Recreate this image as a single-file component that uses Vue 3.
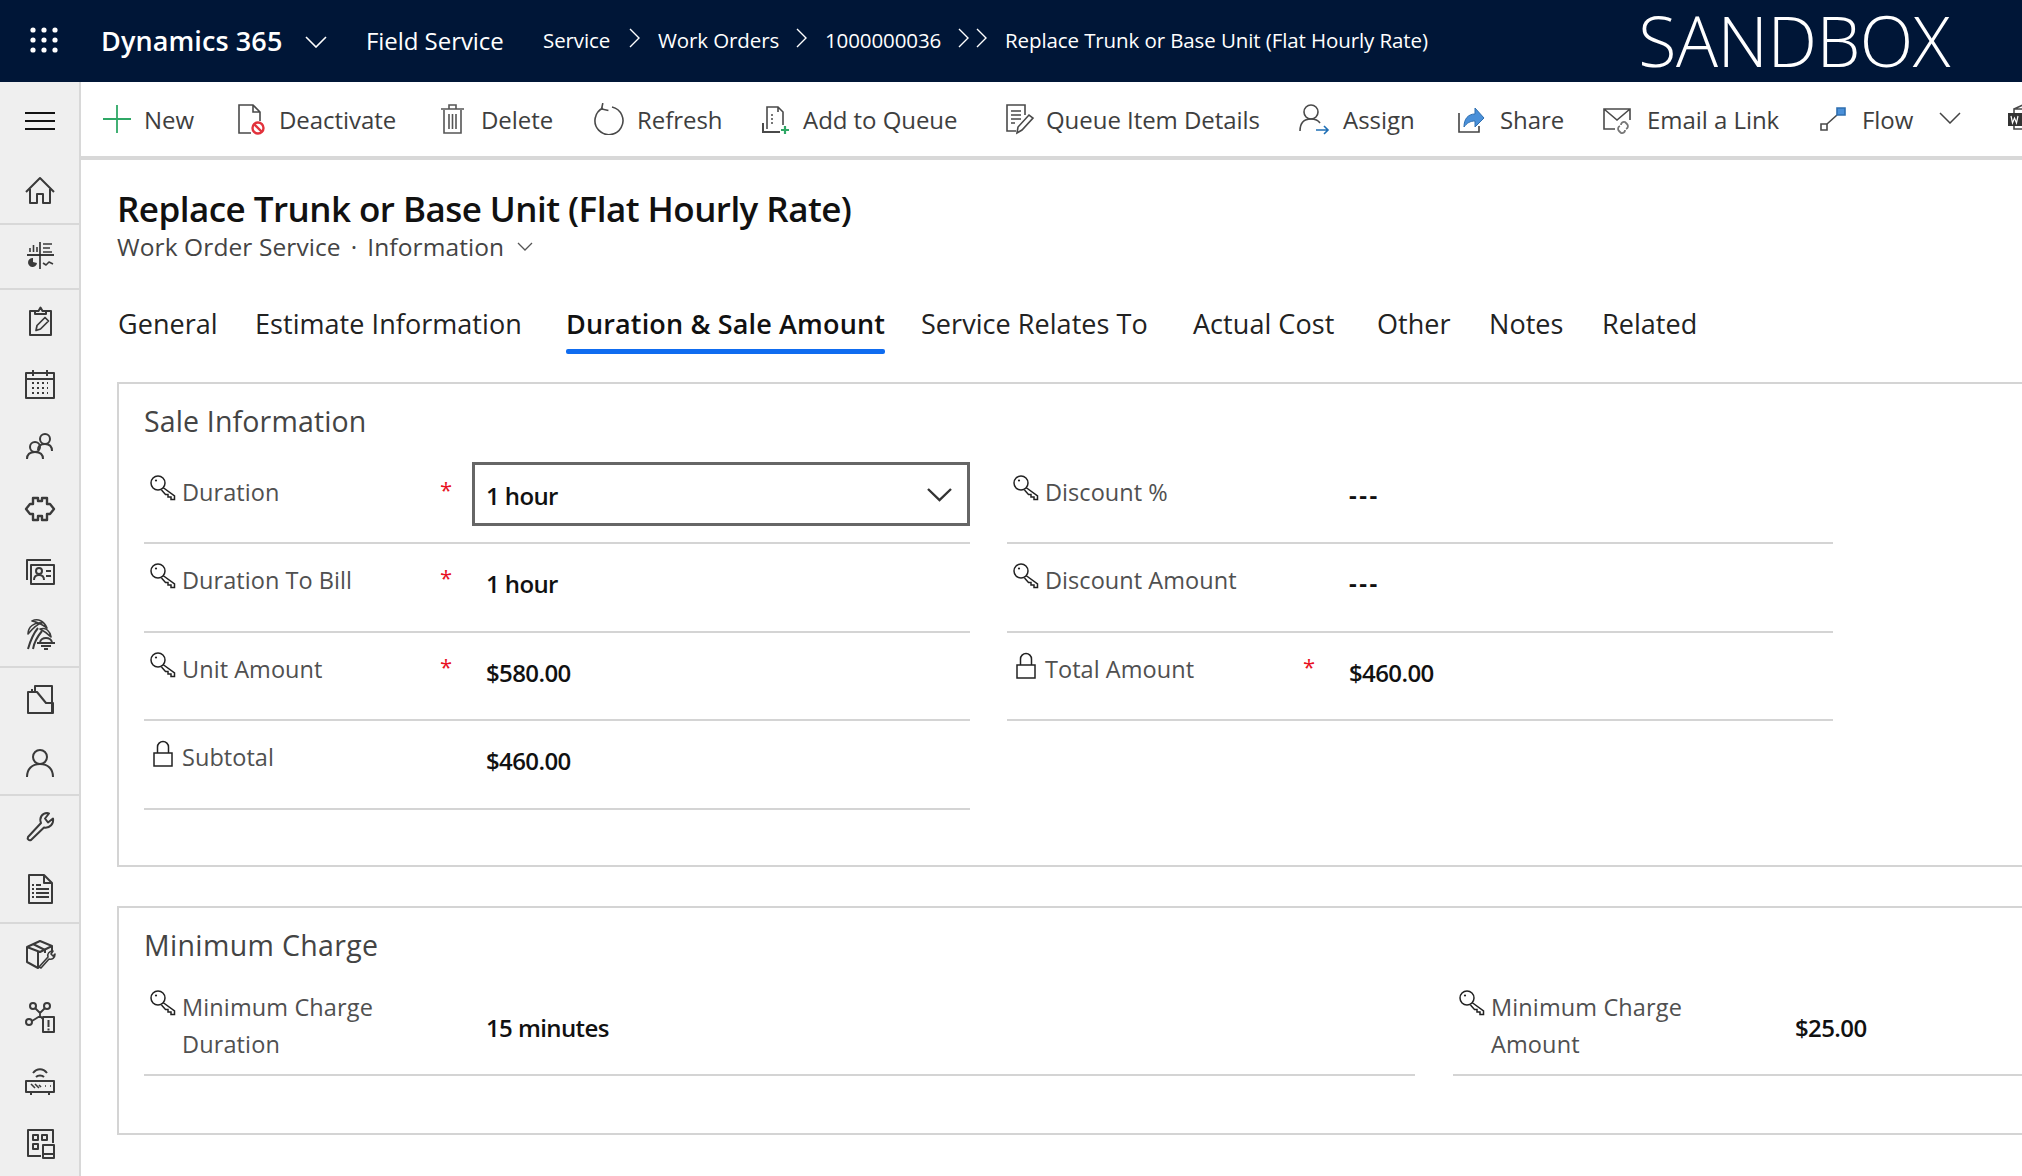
<template>
  <div class="page">
    <header class="topbar">
      <svg class="waffle" width="28" height="26" viewBox="0 0 28 26" fill="#fff">
        <template v-for="y in [3, 13, 23]" :key="y">
          <circle v-for="x in [3, 14, 25]" :key="x" :cx="x" :cy="y" r="2.6" />
        </template>
      </svg>
      <span class="brand">Dynamics 365</span>
      <svg class="brand-chev" width="22" height="12" viewBox="0 0 22 12" fill="none" stroke="#fff" stroke-width="1.6"><path d="M1 1l10 10L21 1" /></svg>
      <span class="app-name">Field Service</span>
      <nav class="crumbs">
        <span class="crumb c1">Service</span>
        <svg class="sep" width="12" height="20" viewBox="0 0 12 20" fill="none" stroke="#fff" stroke-width="1.4"><path d="M1 1l9 9-9 9" /></svg>
        <span class="crumb c2">Work Orders</span>
        <svg class="sep" width="12" height="20" viewBox="0 0 12 20" fill="none" stroke="#fff" stroke-width="1.4"><path d="M1 1l9 9-9 9" /></svg>
        <span class="crumb c3">1000000036</span>
        <svg class="sep" width="30" height="20" viewBox="0 0 30 20" fill="none" stroke="#fff" stroke-width="1.4"><path d="M1 1l9 9-9 9M19 1l9 9-9 9" /></svg>
        <span class="crumb c4">Replace Trunk or Base Unit (Flat Hourly Rate)</span>
      </nav>
      <span class="sandbox">SANDBOX</span>
    </header>

    <div class="body">
      <aside class="sidebar">
        <div class="burger"><span></span><span></span><span></span></div>
        <div v-for="(group, g) in navGroups" :key="g" class="nav-group">
          <div v-for="name in group" :key="name" class="nav-item">
            <svg width="32" height="32" viewBox="0 0 32 32" fill="none" stroke="#3a3a3a" stroke-width="2" stroke-linejoin="round" v-html="navIcons[name]"></svg>
          </div>
        </div>
      </aside>

      <main class="main">
        <div class="toolbar">
          <div v-for="cmd in commands" :key="cmd.label" class="cmd" :style="{ width: cmd.width + 'px', gap: cmd.gap + 'px' }">
            <svg width="32" height="32" viewBox="0 0 32 32" fill="none" stroke="#4a4a4a" stroke-width="1.6" v-html="cmdIcons[cmd.icon]"></svg>
            <span class="cmd-text">{{ cmd.label }}</span>
          </div>
          <svg class="cmd-more" width="22" height="12" viewBox="0 0 22 12" fill="none" stroke="#444" stroke-width="1.5"><path d="M1 1l10 10L21 1" /></svg>
          <svg class="cmd-word" width="32" height="32" viewBox="0 0 32 32" fill="none" stroke="#4a4a4a" stroke-width="1.6" v-html="cmdIcons.word"></svg>
        </div>

        <div class="content">
          <h1 class="title">Replace Trunk or Base Unit (Flat Hourly Rate)</h1>
          <div class="subtitle">
            <span>Work Order Service</span>
            <span class="dot">·</span>
            <span>Information</span>
            <svg width="16" height="9" viewBox="0 0 16 9" fill="none" stroke="#555" stroke-width="1.3"><path d="M1 1l7 7 7-7" /></svg>
          </div>

          <div class="tabs">
            <span v-for="tab in tabs" :key="tab.label" class="tab" :class="{ active: tab.active }" :style="{ width: tab.width + 'px' }">{{ tab.label }}</span>
          </div>

          <section class="card sale">
            <h2 class="card-title">Sale Information</h2>
            <div class="sale-grid">
              <div class="sale-col">
                <div v-for="f in saleLeft" :key="f.label" class="field">
                  <div class="field-label">
                    <svg width="28" height="28" viewBox="0 0 28 28" fill="none" stroke="#222" stroke-width="1.5" v-html="f.locked ? lockIcon : keyIcon"></svg>
                    <span>{{ f.label }}</span>
                  </div>
                  <span class="req">{{ f.required ? '*' : '' }}</span>
                  <div v-if="f.select" class="select">
                    <span>{{ f.value }}</span>
                    <svg width="25" height="14" viewBox="0 0 25 14" fill="none" stroke="#333" stroke-width="2.4"><path d="M1 1l11.500 11L24 1" /></svg>
                  </div>
                  <div v-else class="field-value">{{ f.value }}</div>
                </div>
              </div>
              <div class="sale-col">
                <div v-for="f in saleRight" :key="f.label" class="field">
                  <div class="field-label">
                    <svg width="28" height="28" viewBox="0 0 28 28" fill="none" stroke="#222" stroke-width="1.5" v-html="f.locked ? lockIcon : keyIcon"></svg>
                    <span>{{ f.label }}</span>
                  </div>
                  <span class="req">{{ f.required ? '*' : '' }}</span>
                  <div class="field-value" :class="{ dash: f.value === '---' }">{{ f.value }}</div>
                </div>
              </div>
            </div>
          </section>

          <section class="card minimum">
            <h2 class="card-title">Minimum Charge</h2>
            <div class="min-grid">
              <div v-for="f in minimum" :key="f.value" class="field tall">
                <div class="field-label">
                  <svg width="28" height="28" viewBox="0 0 28 28" fill="none" stroke="#222" stroke-width="1.5" v-html="keyIcon"></svg>
                  <span>{{ f.label }}</span>
                </div>
                <span class="req"></span>
                <div class="field-value">{{ f.value }}</div>
              </div>
            </div>
          </section>
        </div>
      </main>
    </div>
  </div>
</template>

<script setup>
const navGroups = [
  ['home'],
  ['dash'],
  ['clip', 'cal', 'people', 'puzzle', 'card', 'palm'],
  ['folder', 'person'],
  ['wrench', 'doc'],
  ['box', 'graph', 'router', 'tiles']
]

const navIcons = {
  home: '<path d="M2 17L16 3l14 14M6 14v14h7v-9h6v9h7V14"/>',
  dash: '<g stroke-width="1.6"><path d="M3 15h27" stroke-width="2"/><path d="M16 2v27" stroke="#2a2a2a"/><path d="M6 12V8M9.5 12V5M13 12V7M19 4h9M19 8h7M19 12h9"/><path d="M19 23l3 2 3-3 4 2"/></g><path d="M9 18a4.500 4.500 0 1 0 4 5l-4-1z" fill="#3a3a3a" stroke="none"/>',
  clip: '<path d="M11 6H6v24h21V6h-5"/><path d="M11 9V6h3.500l2-3.500 2 3.500H22v3z"/><path d="M12 25.500l1-5 8-8 3.500 3.500-8 8z" stroke-width="1.700"/>',
  cal: '<path d="M2 5h28v25H2zM2 11h28M9 2v6M23 2v6"/><path d="M8 15h16M8 20h16M8 25h16" stroke-dasharray="2 3" stroke-width="2"/>',
  people: '<circle cx="21" cy="8" r="5"/><path d="M14 19c0-4 3-6 7-6s7 2 7 7"/><circle cx="11" cy="16" r="5"/><path d="M3 28c0-5 3-7 8-7s8 2 8 7"/>',
  puzzle: '<path d="M9 5h5v3h4V5h5v6h3l4 5-4 5h-3v6h-5v-4h-4v4H9v-6H6l-4-5 4-5h3z" stroke-width="2.400"/>',
  card: '<path d="M3 24V4h24"/><path d="M7 9h23v19H7z"/><circle cx="15" cy="15" r="3"/><path d="M10 24c0-3 2-5 5-5s5 2 5 5M22 15h5M22 20h5"/>',
  palm: '<path d="M4 30c2-7 4-14 10-21M9 30c1-6 4-12 9-18"/><path d="M4 15c0-7 6-12 14-11-5 1-9 5-14 11zM8 2c6-3 12 0 15 7-4-3-10-6-15-7zM16 10c6-2 10 2 11 8-3-3-7-6-11-8z" stroke-width="1.600"/><path d="M16 23c1-3 4-4 6-4s5 1 6 4M13 24h18M17 27h10M20 30h4"/>',
  folder: '<path d="M11 8V2h17v27"/><path d="M8 8V5"/><path d="M4 29V8h9l9 11h7v10z"/>',
  person: '<circle cx="16" cy="10" r="7"/><path d="M3 30c0-8 5-13 13-13s13 5 13 13"/>',
  wrench: '<path d="M4 26l13-14c-2-5 1-10 6-10l2 .5-4 5 3 4 5-4c1 5-3 10-9 9L7 29c-2 1-4-1-3-3z"/>',
  doc: '<path d="M5 1h15l8 8v20H5zM20 1v8h8" /><path d="M8 11h2M12 11h5M8 15h2M12 15h13M8 19h2M12 19h13M8 23h2M12 23h13"/>',
  box: '<path d="M3 8L16 2l12 5-12 6zM3 8v15l11 6V13"/><path d="M9 5l12 6v3M28 7v6"/><path d="M16 29l9-10c-1-3 1-6 5-6l-2 3 2 2 2-2c0 4-3 6-6 5l-8 9z" stroke-width="1.600" transform="translate(-1 -1)"/>',
  graph: '<circle cx="9" cy="4" r="3"/><circle cx="23" cy="4" r="3"/><circle cx="5" cy="20" r="3"/><path d="M11 6l5 5 5-5M16 11v3l-8 5M16 14l3 3" stroke-width="1.800"/><path d="M19 15h11v15H19zM24.500 18v7M24.500 26.500v2" stroke-width="2"/>',
  router: '<path d="M2 16h28v11H2zM7 27v3M25 27v3"/><path d="M9 8c4-5 10-5 14 0M12 12c2-2 6-2 8 0"/><path d="M7 19l4 4M11 19l4 4M15 20l2 2M21 21h1M26 21h1" stroke-width="1.600"/>',
  tiles: '<path d="M17 29H4V3h25v13"/><path d="M9 8h5v5H9zM18 8h5v5h-5zM9 17h5v5H9zM19 18h11v13H19zM19 27h11"/>'
}

const commands = [
  { label: 'New', icon: 'plus', width: 133, gap: 11 },
  { label: 'Deactivate', icon: 'deactivate', width: 203, gap: 13 },
  { label: 'Delete', icon: 'trash', width: 156, gap: 12 },
  { label: 'Refresh', icon: 'refresh', width: 166, gap: 12 },
  { label: 'Add to Queue', icon: 'queue', width: 244, gap: 12 },
  { label: 'Queue Item Details', icon: 'details', width: 295, gap: 11 },
  { label: 'Assign', icon: 'assign', width: 155, gap: 13 },
  { label: 'Share', icon: 'share', width: 148, gap: 15 },
  { label: 'Email a Link', icon: 'email', width: 215, gap: 14 },
  { label: 'Flow', icon: 'flow', width: 119, gap: 14 }
]

const cmdIcons = {
  plus: '<path d="M16 2v28M2 16h28" stroke="#2fa866" stroke-width="1.8"/>',
  deactivate: '<path d="M17 30H5V2h14l7 7v9M19 2v7h7"/><circle cx="24" cy="25" r="5.500" stroke="#e2323c" stroke-width="2.400"/><path d="M20 21l8 8" stroke="#e2323c" stroke-width="2.400"/>',
  trash: '<path d="M7 7v23h17V7M4 6h23M12 6V2h7v4M12 11v15M15.500 11v15M19 11v15" stroke="#555"/>',
  refresh: '<path d="M10 5a14 14 0 1 0 9-1"/><path d="M9 0v6h7" transform="rotate(12 9 4)"/>',
  queue: '<path d="M8 26V4h11l5 5v13M19 4v5"/><path d="M12 12h2M12 16h2M12 20h2"/><path d="M4 20v9h17" stroke-width="2"/><path d="M26 23v8M22 27h8" stroke="#2fa866" stroke-width="2.200"/>',
  details: '<path d="M22 12V2H4v26h9"/><path d="M8 8h10M8 12h10M8 16h10M8 20h4" /><path d="M14 30l1-6L26 12l4 3-11 12z" />',
  assign: '<circle cx="13" cy="9" r="7"/><path d="M2 28c0-8 4-12 11-12 4 0 7 1 9 4"/><path d="M18 27h12M26 23l4 4-4 4" stroke="#1f6fb5"/>',
  share: '<path d="M6 10v19h20v-6" stroke="#444"/><path d="M11 24c0-8 4-13 11-13V5l9 10-9 9v-6c-5 0-8 2-11 6z" fill="#4a90d9" stroke="#2f6fb0" stroke-width="1"/>',
  email: '<path d="M14 26H3V6h26v11M3 6l13 11L29 6"/><path d="M20 22a3 3 0 0 1 4-3l2 2a3 3 0 0 1-1 5M24 27a3 3 0 0 1-4 3l-2-2a3 3 0 0 1 1-5" stroke="#777" stroke-width="1.800"/>',
  flow: '<path d="M5 21h6v6H5z" /><path d="M11 21l10-9" /><path d="M21 5h8v7h-8z" fill="#4a90d9" stroke="#2f6fb0"/>',
  word: '<path d="M8 6h18v20H8zM8 6l9-4 9 4"/><path d="M2 10h15v13H2z" fill="#333" stroke="none"/><path d="M5 13l1.500 7 2-5 2 5 1.500-7" stroke="#fff" stroke-width="1.200"/>'
}

const keyIcon = '<circle cx="9" cy="9" r="7"/><circle cx="7" cy="6.500" r="1.100" fill="#222" stroke="none"/><path d="M14 13.500L25.500 22v3.500H22V23h-3v-2.500h-2.500L12.500 16"/>'
const lockIcon = '<path d="M5 14h18v13H5zM8.500 14V8a5.500 5.500 0 0 1 11 0v6"/>'

const tabs = [
  { label: 'General', width: 137 },
  { label: 'Estimate Information', width: 311 },
  { label: 'Duration & Sale Amount', width: 355, active: true },
  { label: 'Service Relates To', width: 272 },
  { label: 'Actual Cost', width: 184 },
  { label: 'Other', width: 112 },
  { label: 'Notes', width: 113 },
  { label: 'Related', width: 100 }
]

const saleLeft = [
  { label: 'Duration', required: true, value: '1 hour', select: true },
  { label: 'Duration To Bill', required: true, value: '1 hour' },
  { label: 'Unit Amount', required: true, value: '$580.00' },
  { label: 'Subtotal', value: '$460.00', locked: true }
]

const saleRight = [
  { label: 'Discount %', value: '---' },
  { label: 'Discount Amount', value: '---' },
  { label: 'Total Amount', required: true, value: '$460.00', locked: true }
]

const minimum = [
  { label: 'Minimum Charge Duration', value: '15 minutes' },
  { label: 'Minimum Charge Amount', value: '$25.00' }
]
</script>

<style scoped>
.page {
  width: 2022px;
  height: 1176px;
  overflow: hidden;
  font-family: "Open Sans", "Noto Sans", sans-serif;
  color: #111;
  background: #fff;
}

.topbar {
  height: 82px;
  box-sizing: border-box;
  padding-bottom: 2px;
  background: #001637;
  color: #fff;
  display: flex;
  align-items: center;
}

.waffle { flex: none; margin-left: 30px; }

.brand {
  flex: none;
  margin-left: 43px;
  font-size: 27px;
  font-weight: 600;
  letter-spacing: 0.1px;
  width: 181px;
  white-space: nowrap;
}

.brand-chev { flex: none; margin: 4px 0 0 23px; }

.app-name {
  flex: none;
  margin-left: 39px;
  font-size: 24px;
  letter-spacing: -0.05px;
  width: 143px;
  white-space: nowrap;
}

.crumbs {
  flex: none;
  display: flex;
  align-items: center;
  margin-left: 34px;
  font-size: 20.5px;
  letter-spacing: -0.1px;
  white-space: nowrap;
}

.c1 { width: 86px; }
.c2 { width: 138px; margin-left: 17px; }
.c3 { width: 133px; margin-left: 17px; }
.c4 { margin-left: 17px; }
.crumbs .sep { margin-top: -4px; }

.sandbox {
  flex: none;
  margin-left: auto;
  margin-right: 72px;
  line-height: 80px;
  font-size: 70px;
  font-weight: 300;
  letter-spacing: -0.5px;
}

.body {
  display: flex;
  height: 1094px;
}

.sidebar {
  width: 81px;
  box-sizing: border-box;
  flex: none;
  background: #efefef;
  border-right: 2px solid #d8d8d8;
}

.burger {
  height: 78px;
  display: flex;
  flex-direction: column;
  gap: 6px;
  align-items: center;
  justify-content: center;
}

.burger span {
  width: 30px;
  height: 2px;
  background: #111;
}

.nav-group {
  border-bottom: 2px solid #d8d8d8;
}

.nav-group:first-of-type .nav-item { height: 61px; }
.nav-group:last-child { border-bottom: none; }

.nav-item {
  height: 62.8px;
  display: flex;
  align-items: center;
  justify-content: center;
}

.main {
  flex: 1;
  min-width: 0;
  overflow: hidden;
}

.toolbar {
  height: 74px;
  border-bottom: 4px solid #d8d8d8;
  display: flex;
  align-items: center;
  padding-left: 20px;
  white-space: nowrap;
}

.cmd {
  flex: none;
  display: flex;
  align-items: center;
  font-size: 24px;
  color: #3e3e3e;
}

.cmd svg { flex: none; }
.cmd-text { letter-spacing: -0.05px; }

.cmd-more { flex: none; margin-left: 4px; margin-top: -2px; }
.cmd-word { flex: none; margin-left: 45px; }

.content {
  padding: 24px 0 0 36px;
}

.title {
  margin: 0;
  font-size: 35px;
  line-height: 50px;
  font-weight: 600;
  letter-spacing: -0.54px;
  color: #111;
  white-space: nowrap;
}

.subtitle {
  display: flex;
  align-items: center;
  gap: 10px;
  height: 30px;
  margin-top: -3px;
  font-size: 24.5px;
  letter-spacing: 0.1px;
  color: #444;
  font-weight: 500;
}

.subtitle svg { margin-left: 3px; }

.tabs {
  display: flex;
  margin-top: 44px;
  padding-left: 1px;
  height: 77px;
}

.tab {
  flex: none;
  font-size: 27px;
  line-height: 38px;
  letter-spacing: 0.05px;
  color: #222;
  white-space: nowrap;
}

.tab.active {
  font-weight: 600;
  letter-spacing: 0.15px;
  color: #111;
  position: relative;
}

.tab.active::after {
  content: "";
  position: absolute;
  left: 0;
  top: 44px;
  width: 319px;
  height: 5px;
  border-radius: 2px;
  background: #0f6cf0;
}

.card {
  width: 2000px;
  border: 2px solid #d4d4d4;
  padding: 0 0 0 25px;
  box-sizing: border-box;
}

.sale {
  height: 485px;
}

.minimum {
  height: 229px;
  margin-top: 39px;
}

.card-title {
  margin: 0;
  font-size: 28.5px;
  font-weight: 400;
  line-height: 38px;
  letter-spacing: 0.15px;
  color: #444;
  white-space: nowrap;
}

.sale .card-title { padding-top: 18px; height: 54px; }
.minimum .card-title { padding-top: 18px; height: 46px; letter-spacing: 0.35px; }

.sale-grid {
  display: grid;
  grid-template-columns: 826px 826px;
  column-gap: 37px;
}

.field {
  height: 88.4px;
  box-sizing: border-box;
  border-bottom: 2px solid #d4d4d4;
  display: grid;
  grid-template-columns: 296px 46px 1fr;
}

.field.tall {
  height: 104px;
}

.min-grid {
  display: grid;
  grid-template-columns: 1271px 800px;
  column-gap: 38px;
}

.field-label {
  display: flex;
  align-items: flex-start;
  gap: 5px;
  padding: 18px 0 0 5px;
  font-size: 23.5px;
  line-height: 37px;
  letter-spacing: 0.05px;
  color: #505050;
}

.tall .field-label {
  padding-top: 17px;
  letter-spacing: 0.12px;
}

.field-label svg { flex: none; margin-top: 0; }

.req {
  color: #e81123;
  font-size: 22px;
  line-height: 30px;
  padding-top: 18px;
}

.field-value {
  padding-top: 22px;
  font-size: 24px;
  line-height: 36px;
  font-weight: 600;
  letter-spacing: -0.6px;
  color: #111;
}

.field-value.dash {
  font-weight: 700;
  letter-spacing: 2.5px;
  padding-top: 21px;
}

.tall .field-value { padding-top: 38px; }

.select {
  width: 498px;
  height: 64px;
  box-sizing: border-box;
  margin: 6px 0 0 -14px;
  border: 3px solid #666;
  display: flex;
  align-items: center;
  justify-content: space-between;
  padding: 2px 15px 0 11px;
  font-size: 24px;
  font-weight: 600;
  letter-spacing: -0.6px;
}
</style>

<style>
html, body { margin: 0; padding: 0; background: #fff; }
</style>
